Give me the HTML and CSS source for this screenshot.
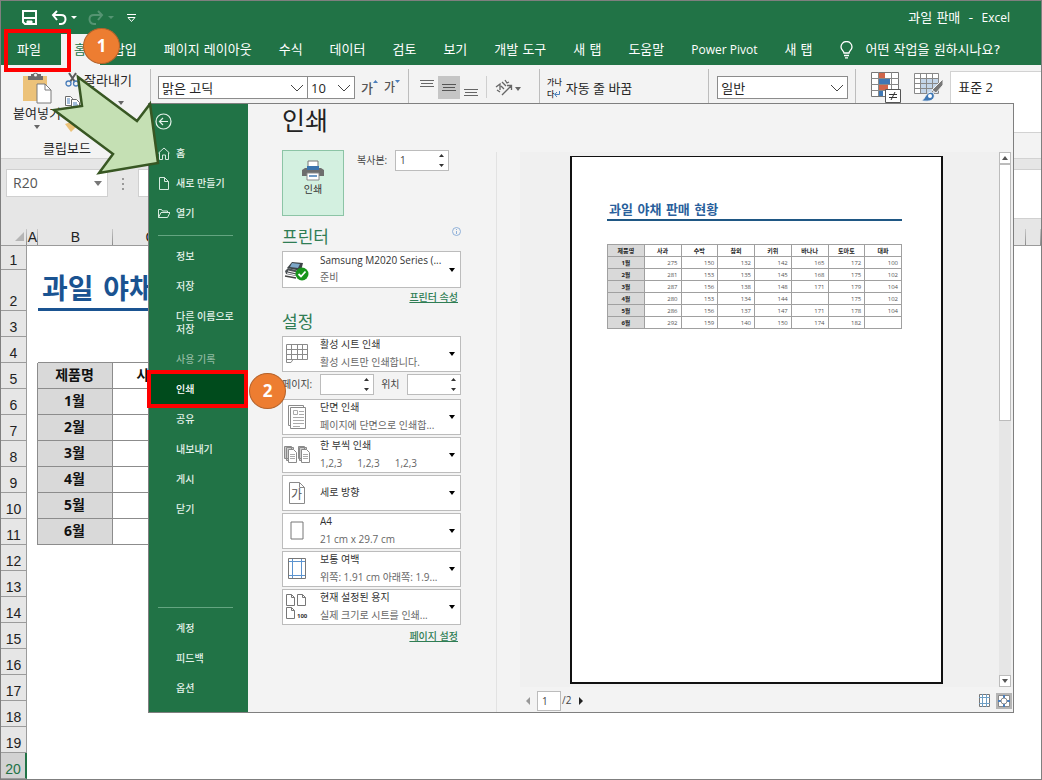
FILE: index.html
```html
<!DOCTYPE html>
<html lang="ko">

<head>
    <meta charset="UTF-8">
    <meta name="viewport" content="width=device-width, initial-scale=1.0">
    <title>과일 판매 - Excel</title>
    <link rel="stylesheet" href="styles.css">
</head>

<body>
    <div class="excel">
        <header class="top">
            <div class="title-bar">
                <button class="quick save" aria-label="저장">
                    <svg width="15" height="15" viewBox="0 0 15 15" fill="none" stroke="#fff" stroke-width="2"><path d="M1 1h13v13H3l-2-2zM1 8h13"/><path d="M5 14v-3h5v3" fill="#fff" stroke-width="1"/></svg>
                </button>
                <button class="quick undo" aria-label="실행 취소">
                    <svg width="27" height="16" viewBox="0 0 27 16" fill="none" stroke="#fff" stroke-width="2"><path d="M6 1L2 5l4 5M2 5h8c6 0 6 8 0 9H8"/><path d="M20 6h6l-3 3z" fill="#fff" stroke="none"/></svg>
                </button>
                <button class="quick redo" aria-label="다시 실행">
                    <svg width="27" height="16" viewBox="0 0 27 16" fill="none" stroke="#559472" stroke-width="2"><path d="M10 1l4 4-4 5M14 5H6c-6 0-6 8 0 9h2"/><path d="M20 6h6l-3 3z" fill="#559472" stroke="none"/></svg>
                </button>
                <button class="quick more" aria-label="빠른 실행 도구 모음">
                    <svg width="9" height="8" viewBox="0 0 9 8" fill="none" stroke="#fff"><path d="M0 .5h9M1 3.500h7l-3.500 4z"/></svg>
                </button>
                <span class="doc-title">과일 판매 &nbsp;- &nbsp;<span class="latin">Excel</span></span>
            </div>
            <nav class="tabs">
                <a class="tab file" href="#">파일</a>
                <a class="tab active" href="#">홈</a>
                <a class="tab" href="#">삽입</a>
                <a class="tab" href="#">페이지 레이아웃</a>
                <a class="tab" href="#">수식</a>
                <a class="tab" href="#">데이터</a>
                <a class="tab" href="#">검토</a>
                <a class="tab" href="#">보기</a>
                <a class="tab" href="#">개발 도구</a>
                <a class="tab" href="#">새 탭</a>
                <a class="tab" href="#">도움말</a>
                <a class="tab latin" href="#">Power Pivot</a>
                <a class="tab" href="#">새 탭</a>
                <a class="tab tell-me" href="#">
                    <svg width="13" height="18" viewBox="0 0 13 18" fill="none" stroke="#fff" stroke-width="1.3"><path d="M4 12c0-2-3-3-3-6a5.400 5.400 0 0 1 11 0c0 3-3 4-3 6zM4 14.500h5M5 16.800h3"/></svg>
                    어떤 작업을 원하시나요?
                </a>
            </nav>
        </header>

        <section class="ribbon">
            <div class="group clipboard">
                <button class="paste">
                    <svg width="30" height="32" viewBox="0 0 30 32"><path d="M1 4h24v25H1z" fill="#ecc279"/><path d="M6 4h3V2h2a3 3 0 0 1 5 0h3v2h2v4H6z" fill="#6b6b6b"/><circle cx="13.500" cy="3" r="1.500" fill="#f3f3f3"/><path d="M15 12h8l6 6v13H15z" fill="#fff" stroke="#7a7a7a"/><path d="M23 12v6h6" fill="none" stroke="#7a7a7a"/></svg>
                    <span>붙여넣기</span>
                    <svg width="6" height="4" viewBox="0 0 6 4"><path d="M0 0h6L3 4z" fill="#666"/></svg>
                </button>
                <div class="clip-tools">
                    <button><svg width="15" height="15" viewBox="0 0 15 15" fill="none" stroke="#5b5b5b" stroke-width="2"><path d="M4 1l6 9M11 1L5 10"/><circle cx="3.500" cy="11.500" r="2.500" stroke="#4a7ebb" stroke-width="1.300"/><circle cx="11" cy="11.500" r="2.500" stroke="#4a7ebb" stroke-width="1.300"/></svg>잘라내기</button>
                    <button aria-label="복사"><svg width="15" height="13" viewBox="0 0 15 13" fill="#fff" stroke="#6b6b6b"><path d="M.5.500h5l2 2v7h-7z"/><path d="M6.500 3.500h5l3 3v6h-8z"/><path d="M2 3h3M2 5h3M2 7h3M8 7h4M8 9h5M8 11h5" stroke="#4a7ebb"/></svg><svg class="caret" width="6" height="4" viewBox="0 0 6 4"><path d="M0 0h6L3 4z" fill="#666"/></svg></button>
                    <button aria-label="서식 복사"><svg width="15" height="13" viewBox="0 0 15 13"><path d="M0 5l6-2 5 5-5 5z" fill="#ecc279"/><path d="M7 3l5-3 2 3-4 4z" fill="#777"/></svg></button>
                </div>
                <span class="group-name">클립보드</span>
            </div>

            <div class="group fonts">
                <label class="combo font-name">
                    <select aria-label="글꼴"><option>맑은 고딕</option></select>
                    <svg width="14" height="8" viewBox="0 0 14 8" fill="none" stroke="#444"><path d="M1 1l6 6 6-6"/></svg>
                </label>
                <label class="combo font-size">
                    <select aria-label="글꼴 크기"><option>10</option></select>
                    <svg width="14" height="8" viewBox="0 0 14 8" fill="none" stroke="#444"><path d="M1 1l6 6 6-6"/></svg>
                </label>
                <button class="grow">가<svg width="5" height="3" viewBox="0 0 5 3"><path d="M0 3h5L2.500 0z" fill="#4a7ebb"/></svg></button>
                <button class="grow small">가<svg width="5" height="3" viewBox="0 0 5 3"><path d="M0 0h5L2.500 3z" fill="#4a7ebb"/></svg></button>
            </div>

            <div class="group aligns">
                <button aria-label="위쪽 맞춤"><svg width="14" height="20" viewBox="0 0 14 20" stroke="#666"><path d="M0 2.500h14M1 5.500h12M0 8.500h14"/></svg></button>
                <button class="on" aria-label="가운데 맞춤"><svg width="14" height="20" viewBox="0 0 14 20" stroke="#555"><path d="M0 6.500h14M1 9.500h12M0 12.500h14"/></svg></button>
                <button aria-label="아래쪽 맞춤"><svg width="14" height="20" viewBox="0 0 14 20" stroke="#666"><path d="M0 11.500h14M1 14.500h12M0 17.500h14"/></svg></button>
                <span class="thin-line"></span>
                <button class="rotate" aria-label="방향"><svg width="26" height="18" viewBox="0 0 26 18" fill="none" stroke="#666" stroke-width="1.300"><path d="M1 8l4-3v6M2 11l3 2M7 3l4 4M6 7l3 3M10 1l2 3 2-1M7 16l9-9M12 6.500h4.500V11"/><path d="M20 8h6l-3 4z" fill="#666" stroke="none"/></svg></button>
            </div>

            <div class="group wrap">
                <button>
                    <span class="wrap-icon">
                        <span>가나</span>
                        <span>다<svg width="6" height="6" viewBox="0 0 6 6" fill="none" stroke="#4a7ebb"><path d="M5.500 0v3.500H1M3 1L.7 3.500 3 6"/></svg></span>
                    </span>
                    자동 줄 바꿈
                </button>
            </div>

            <div class="group numbers">
                <label class="combo">
                    <select aria-label="표시 형식"><option>일반</option></select>
                    <svg width="14" height="8" viewBox="0 0 14 8" fill="none" stroke="#444"><path d="M1 1l6 6 6-6"/></svg>
                </label>
            </div>

            <div class="group styles">
                <button aria-label="조건부 서식"><svg width="30" height="31" viewBox="0 0 30 31"><path d="M.5.500h27v24H.5z" fill="#fff" stroke="#777"/><path d="M8 1h6v5H8zM8 13h9v5H8z" fill="#d0654a"/><path d="M8 7h11v5H8zM8 19h4v5H8z" fill="#3f78b5"/><path d="M0 6.500h28M0 12.500h28M0 18.500h28M7.500 0v24M20.500 0v24" stroke="#888" fill="none"/><path d="M14.500 17.500h15v13h-15z" fill="#fff" stroke="#555"/><path d="M18 22.500h8M18 25.500h8M24 20l-4 8" stroke="#333" fill="none"/></svg></button>
                <button class="cell-style" aria-label="셀 스타일"><svg width="30" height="29" viewBox="0 0 30 29"><path d="M.5.500h24v20H.5z" fill="#fff"/><path d="M7 6h17v14H7z" fill="#c3d5e8"/><path d="M.5.500h24v20H.5zM0 5.500h25M0 10.500h25M0 15.500h25M6.500 0v20M12.500 0v20M18.500 0v20" fill="none" stroke="#888"/><path d="M29 6v6l-7 8-4-3z" fill="#777" stroke="#f3f3f3"/><path d="M7 28c4-1 4-8 10-9 4 1 4 5 2 7-2 3-8 2-12 2z" fill="#3f78b5" stroke="#f3f3f3"/><circle cx="16" cy="23" r="2" fill="#fff"/></svg></button>
                <div class="gallery"><span>표준 2</span></div>
            </div>
        </section>

        <div class="formula-bar">
            <label class="name-box">
                <input type="text" value="R20" aria-label="이름 상자">
                <svg width="8" height="5" viewBox="0 0 8 5"><path d="M0 0h8L4 5z" fill="#777"/></svg>
            </label>
            <svg class="grip" width="2" height="12" viewBox="0 0 2 12" fill="#999"><path d="M0 0h2v2H0zM0 5h2v2H0zM0 10h2v2H0z"/></svg>
            <input class="formula" type="text" aria-label="수식 입력줄">
            <span class="formula-end"></span>
        </div>

        <table class="sheet">
            <colgroup>
                <col class="c-num"><col class="c-a"><col class="c-data"><col class="c-data"><col><col class="c-last">
            </colgroup>
            <thead>
                <tr>
                    <th class="corner"><svg width="9" height="9" viewBox="0 0 9 9"><path d="M9 0v9H0z" fill="#b5b5b5"/></svg></th>
                    <th>A</th><th>B</th><th>C</th><th></th><th></th>
                </tr>
            </thead>
            <tbody>
                <tr class="r1"><th>1</th></tr>
                <tr class="r2"><th>2</th><td></td><td class="sheet-title" colspan="2">과일 야채</td></tr>
                <tr><th>3</th></tr>
                <tr class="above"><th>4</th><td></td><td></td><td></td></tr>
                <tr class="data"><th>5</th><td></td><td>제품명</td><td>사과</td></tr>
                <tr class="data"><th>6</th><td></td><td>1월</td><td></td></tr>
                <tr class="data"><th>7</th><td></td><td>2월</td><td></td></tr>
                <tr class="data"><th>8</th><td></td><td>3월</td><td></td></tr>
                <tr class="data"><th>9</th><td></td><td>4월</td><td></td></tr>
                <tr class="data"><th>10</th><td></td><td>5월</td><td></td></tr>
                <tr class="data"><th>11</th><td></td><td>6월</td><td></td></tr>
                <tr><th>12</th></tr>
                <tr><th>13</th></tr>
                <tr><th>14</th></tr>
                <tr><th>15</th></tr>
                <tr><th>16</th></tr>
                <tr><th>17</th></tr>
                <tr><th>18</th></tr>
                <tr><th>19</th></tr>
                <tr class="current"><th>20</th></tr>
            </tbody>
        </table>

        <!-- file menu window, over the sheet -->
        <div class="backstage">
            <nav class="side">
                <a class="back" href="#" aria-label="뒤로"><svg width="17" height="17" viewBox="0 0 17 17" fill="none" stroke="#e4f2ea" stroke-width="1.200"><circle cx="8.500" cy="8.500" r="7.500"/><path d="M13 8.500H4.500M8 5L4.500 8.500 8 12"/></svg></a>
                <a href="#"><svg width="12" height="13" viewBox="0 0 12 13" fill="none" stroke="#d6eadf"><path d="M.5 6L6 1l5.500 5M1.500 5.500v7H4.500V8h3v4.500h3v-7"/></svg>홈</a>
                <a href="#"><svg width="12" height="13" viewBox="0 0 12 13" fill="none" stroke="#d6eadf"><path d="M1.500.500h5l4 4v8h-9zM6.500.500v4h4"/></svg>새로 만들기</a>
                <a href="#"><svg width="12" height="13" viewBox="0 0 12 13" fill="none" stroke="#d6eadf"><path d="M.5 10.500v-8h3l1 1.500h5v2M.5 10.500l2.500-5h9l-2.500 5z"/></svg>열기</a>
                <hr>
                <a class="sub" href="#">정보</a>
                <a class="sub" href="#">저장</a>
                <a class="sub two" href="#">다른 이름으로 저장</a>
                <a class="sub off" href="#">사용 기록</a>
                <a class="sub print-link" href="#">인쇄</a>
                <a class="sub" href="#">공유</a>
                <a class="sub" href="#">내보내기</a>
                <a class="sub" href="#">게시</a>
                <a class="sub" href="#">닫기</a>
                <div class="side-bottom">
                    <hr>
                    <a class="sub" href="#">계정</a>
                    <a class="sub" href="#">피드백</a>
                    <a class="sub" href="#">옵션</a>
                </div>
            </nav>

            <div class="options">
                <h1>인쇄</h1>
                <div class="print-row">
                    <button class="print-button">
                        <svg width="22" height="21" viewBox="0 0 22 21"><path d="M6 1h10v8H6z" fill="#fff" stroke="#777"/><path d="M0 10l3-2h16l3 2v6H0z" fill="#6d6d6d"/><path d="M5 6h12v4H5z" fill="#3b74ae"/><path d="M5 13h12v7H5z" fill="#fff" stroke="#8a8a8a"/><path d="M7 15h8v2H7z" fill="#6f9ac5"/></svg>
                        인쇄
                    </button>
                    <label for="copies">복사본:</label>
                    <span class="spin">
                        <input id="copies" type="text" value="1">
                        <svg width="5" height="13" viewBox="0 0 5 13" fill="#333"><path d="M0 3h5L2.500 0zM0 10h5l-2.500 3z"/></svg>
                    </span>
                </div>

                <div class="heading">
                    <h2>프린터</h2>
                    <svg width="9" height="9" viewBox="0 0 9 9" fill="none" stroke="#8fb0d8"><circle cx="4.500" cy="4.500" r="4"/><path d="M4.500 2v1M4.500 4v3"/></svg>
                </div>
                <label class="setting">
                    <svg class="icon" width="24" height="22" viewBox="0 0 24 22"><path d="M2 9l5-6 11 1-2 8z" fill="#3d4347"/><path d="M7 4l8 1-2 4-8-1z" fill="#7da7c8"/><path d="M0 12l3-3 11 3v3l-3 2-10-2z" fill="#4e5357"/><path d="M3 12l9 2M2 14l9 2" stroke="#fff"/><path d="M0 17l11 2" stroke="#444" stroke-width="1.500"/><circle cx="17" cy="15" r="6.500" fill="#17951b"/><path d="M13.500 15l2.500 2.500 4.500-5" fill="none" stroke="#fff" stroke-width="1.800"/></svg>
                    <span class="setting-text">
                        <select aria-label="프린터"><option>Samsung M2020 Series (...</option></select>
                        <small>준비</small>
                    </span>
                    <svg class="arrow" width="6" height="4" viewBox="0 0 6 4"><path d="M0 0h6L3 4z"/></svg>
                </label>
                <a class="more-link" href="#">프린터 속성</a>

                <div class="heading second"><h2>설정</h2></div>
                <div class="settings">
                    <label class="setting">
                        <svg class="icon" width="24" height="22" viewBox="0 0 24 22" fill="none" stroke="#8a8a8a"><path d="M1.500 1.500h21v15H8l-2 3H1.500zM1.500 6.500h21M1.500 11.500h21M6.500 1.500v15M12.500 1.500v15M17.500 1.500v15M2 16.500h7"/></svg>
                        <span class="setting-text">
                            <select aria-label="인쇄 대상"><option>활성 시트 인쇄</option></select>
                            <small>활성 시트만 인쇄합니다.</small>
                        </span>
                        <svg class="arrow" width="6" height="4" viewBox="0 0 6 4"><path d="M0 0h6L3 4z"/></svg>
                    </label>
                    <div class="pages">
                        <label for="from">페이지:</label>
                        <span class="spin">
                            <input id="from" type="text">
                            <svg width="5" height="13" viewBox="0 0 5 13" fill="#333"><path d="M0 3h5L2.500 0zM0 10h5l-2.500 3z"/></svg>
                        </span>
                        <label for="to">위치</label>
                        <span class="spin">
                            <input id="to" type="text">
                            <svg width="5" height="13" viewBox="0 0 5 13" fill="#333"><path d="M0 3h5L2.500 0zM0 10h5l-2.500 3z"/></svg>
                        </span>
                    </div>
                    <label class="setting">
                        <svg class="icon" width="24" height="24" viewBox="0 0 24 24" fill="#fff" stroke="#8a8a8a"><path d="M3.500.500h15v20h-15z"/><path d="M5.500 2.500h15v21h-15z"/><path d="M8.500 5.500h4v4h-4zM14 6.500h5M14 9.500h5M8 12.500h11M8 15.500h11M8 18.500h11M8 21.500h7" stroke="#aaa"/></svg>
                        <span class="setting-text">
                            <select aria-label="단면 또는 양면"><option>단면 인쇄</option></select>
                            <small>페이지에 단면으로 인쇄합...</small>
                        </span>
                        <svg class="arrow" width="6" height="4" viewBox="0 0 6 4"><path d="M0 0h6L3 4z"/></svg>
                    </label>
                    <label class="setting">
                        <svg class="icon" width="26" height="18" viewBox="0 0 26 18" fill="#fff" stroke="#8a8a8a"><path d="M.5.500h7v12h-7zM2.500 1.500h7v13h-7z" fill="#ccc"/><path d="M4.500 3.500h5l3 3v10h-8z"/><path d="M14.500.500h6v12h-6zM15.500 1.500h7v13h-7z" fill="#ccc"/><path d="M17.500 3.500h5l3 3v10h-8z"/><path d="M6 8.500h5M6 10.500h5M6 12.500h5M19 8.500h5M19 10.500h5M19 12.500h5" stroke="#aaa"/></svg>
                        <span class="setting-text">
                            <select aria-label="한 부씩 인쇄"><option>한 부씩 인쇄</option></select>
                            <small class="orders"><span>1,2,3</span><span>1,2,3</span><span>1,2,3</span></small>
                        </span>
                        <svg class="arrow" width="6" height="4" viewBox="0 0 6 4"><path d="M0 0h6L3 4z"/></svg>
                    </label>
                    <label class="setting single">
                        <svg class="icon" width="20" height="22" viewBox="0 0 20 22" fill="none" stroke="#8a8a8a"><path d="M2.500.500h10l5 5v16h-15zM12.500.500v5h5"/><text x="4" y="17" font-size="12" fill="#555" stroke="none">가</text></svg>
                        <span class="setting-text">
                            <select aria-label="용지 방향"><option>세로 방향</option></select>
                        </span>
                        <svg class="arrow" width="6" height="4" viewBox="0 0 6 4"><path d="M0 0h6L3 4z"/></svg>
                    </label>
                    <label class="setting">
                        <svg class="icon" width="14" height="20" viewBox="0 0 14 20" fill="#fff" stroke="#777"><path d="M1 1h12v17H1z"/></svg>
                        <span class="setting-text">
                            <select aria-label="용지 크기"><option>A4</option></select>
                            <small>21 cm x 29.7 cm</small>
                        </span>
                        <svg class="arrow" width="6" height="4" viewBox="0 0 6 4"><path d="M0 0h6L3 4z"/></svg>
                    </label>
                    <label class="setting">
                        <svg class="icon" width="18" height="22" viewBox="0 0 18 22" fill="none" stroke="#777"><path d="M.5.500h17v20H.5z"/><path d="M4.500 1v19M13.500 1v19M1 3.500h16M1 17.500h16" stroke="#5b93cf"/></svg>
                        <span class="setting-text">
                            <select aria-label="여백"><option>보통 여백</option></select>
                            <small>위쪽: 1.91 cm 아래쪽: 1.9...</small>
                        </span>
                        <svg class="arrow" width="6" height="4" viewBox="0 0 6 4"><path d="M0 0h6L3 4z"/></svg>
                    </label>
                    <label class="setting">
                        <svg class="icon" width="22" height="26" viewBox="0 0 22 26" fill="none" stroke="#777"><path d="M.5.500h5l3 3v8h-8zM5.500.500v3h3M11.500.500h5l3 3v8h-8zM16.500.500v3h3M.5 13.500h5l3 3v8h-8zM5.500 13.500v3h3"/><text x="11" y="24" font-size="6" font-weight="bold" fill="#333" stroke="none">100</text></svg>
                        <span class="setting-text">
                            <select aria-label="배율"><option>현재 설정된 용지</option></select>
                            <small>실제 크기로 시트를 인쇄...</small>
                        </span>
                        <svg class="arrow" width="6" height="4" viewBox="0 0 6 4"><path d="M0 0h6L3 4z"/></svg>
                    </label>
                </div>
                <a class="more-link" href="#">페이지 설정</a>
            </div>

            <div class="preview">
                <div class="preview-main">
                    <div class="canvas">
                        <div class="paper">
                            <h3>과일 야채 판매 현황</h3>
                            <table class="paper-table">
                                <thead>
                                    <tr><th>제품명</th><th>사과</th><th>수박</th><th>참외</th><th>키위</th><th>바나나</th><th>토마토</th><th>대파</th></tr>
                                </thead>
                                <tbody>
                                    <tr><th>1월</th><td>275</td><td>150</td><td>132</td><td>142</td><td>165</td><td>172</td><td>100</td></tr>
                                    <tr><th>2월</th><td>281</td><td>153</td><td>135</td><td>145</td><td>168</td><td>175</td><td>102</td></tr>
                                    <tr><th>3월</th><td>287</td><td>156</td><td>138</td><td>148</td><td>171</td><td>179</td><td>104</td></tr>
                                    <tr><th>4월</th><td>280</td><td>153</td><td>134</td><td>144</td><td></td><td>175</td><td>102</td></tr>
                                    <tr><th>5월</th><td>286</td><td>156</td><td>137</td><td>147</td><td>171</td><td>178</td><td>104</td></tr>
                                    <tr><th>6월</th><td>292</td><td>159</td><td>140</td><td>150</td><td>174</td><td>182</td><td></td></tr>
                                </tbody>
                            </table>
                        </div>
                    </div>
                    <div class="scroll">
                        <button aria-label="위로"><svg width="6" height="4" viewBox="0 0 6 4"><path d="M0 4h6L3 0z" fill="#555"/></svg></button>
                        <span class="thumb"></span>
                        <button class="down" aria-label="아래로"><svg width="6" height="4" viewBox="0 0 6 4"><path d="M0 0h6L3 4z" fill="#555"/></svg></button>
                    </div>
                </div>
                <div class="pager">
                    <button aria-label="이전 페이지"><svg width="4" height="8" viewBox="0 0 4 8"><path d="M4 0v8L0 4z" fill="#999"/></svg></button>
                    <input type="text" value="1" aria-label="현재 페이지">
                    <span>/2</span>
                    <button aria-label="다음 페이지"><svg width="4" height="8" viewBox="0 0 4 8"><path d="M0 0v8l4-4z" fill="#222"/></svg></button>
                    <button class="margins" aria-label="여백 표시"><svg width="11" height="13" viewBox="0 0 11 13" fill="#fff" stroke="#777"><path d="M.5.500h10v12H.5z"/><path d="M3.500 0v13M7.500 0v13M0 3.500h11M0 9.500h11" stroke="#6f9fc4"/></svg></button>
                    <button class="zoom" aria-label="페이지 확대/축소"><svg width="12" height="12" viewBox="0 0 12 12" fill="#fff" stroke="#8a8a8a"><path d="M.5.500h11v11H.5z"/><path d="M6 0v3M6 9v3M0 6h3M9 6h3" stroke="#4a7ebb" stroke-width="2"/><circle cx="6" cy="6" r="3"/></svg></button>
                </div>
            </div>
        </div>

        <!-- step marks -->
        <div class="mark mark-file"></div>
        <div class="mark mark-print"></div>
        <svg class="big-arrow" width="110" height="102" viewBox="0 0 110 102"><path d="M28 4L87 48l13-17 8 59-59 10 14-19L4 37l28-4z" fill="#c5e0b4" stroke="#385723" stroke-width="2.500"/></svg>
        <div class="step step-one">1</div>
        <div class="step step-two">2</div>
    </div>
</body>

</html>
```

FILE: styles.css
```css
* {
    box-sizing: border-box;
}

body {
    margin: 0;
    font-family: "Open Sans", "Noto Sans CJK KR", sans-serif;
    font-size: 13px;
    line-height: 16px;
    color: #262626;
    background-color: #fff;
}

button,
input,
select {
    font: inherit;
    color: inherit;
    margin: 0;
    padding: 0;
    border: 0;
    border-radius: 0;
    background: none;
}

select {
    appearance: none;
    min-width: 0;
}

input {
    min-width: 0;
}

a {
    color: inherit;
    text-decoration: none;
}

svg {
    display: block;
    flex-shrink: 0;
}

.excel {
    position: relative;
    min-height: 100vh;
    border: 1px solid #7f7f7f;
    overflow: hidden;
}

/* title bar and tabs */

.top {
    height: 64px;
    background-color: #217346;
    color: #fff;
    font-family: "DejaVu Sans", "Noto Sans CJK KR", sans-serif;
    display: flex;
    flex-direction: column;
}

.title-bar {
    height: 33px;
    display: flex;
    align-items: center;
    padding: 0 31px 0 21px;
}

.undo {
    margin-left: 14px;
}

.redo {
    margin-left: 10px;
}

.more {
    margin-left: 12px;
}

.doc-title {
    margin-left: auto;
}

.tabs {
    flex: 1;
    display: flex;
    white-space: nowrap;
}

.tab {
    display: flex;
    align-items: center;
    padding: 0 14px 0 13px;
}

.tab.file {
    padding: 0 20px 0 16px;
}

.tab.active {
    background-color: #f3f3f3;
    color: #217346;
}

.latin {
    font-family: "Open Sans", sans-serif;
    font-size: 12px;
}

.tell-me {
    gap: 13px;
}

/* ribbon */

.ribbon {
    height: 94px;
    background-color: #f3f3f3;
    border-bottom: 1px solid #d2d2d2;
    display: flex;
    white-space: nowrap;
}

.group {
    display: flex;
    align-items: flex-start;
    margin-top: 4px;
    padding-top: 7px;
    border-right: 1px solid #bdbdbd;
}

.combo {
    height: 23px;
    display: flex;
    align-items: center;
    background-color: #fff;
    border: 1px solid #8c8c8c;
    padding: 0 3px;
}

.combo select {
    flex: 1;
}

.clipboard {
    width: 150px;
    flex-shrink: 0;
    display: grid;
    grid-template-columns: 64px 1fr;
    grid-template-rows: 71px 18px;
    padding: 0 0 0 10px;
}

.paste {
    display: flex;
    flex-direction: column;
    align-items: center;
    padding-top: 3px;
    width: 52px;
    white-space: nowrap;
}

.paste span {
    line-height: 18px;
    margin-bottom: 3px;
}

.clip-tools {
    display: flex;
    flex-direction: column;
    gap: 2px;
    margin-left: -10px;
}

.clip-tools button {
    height: 21px;
    display: flex;
    align-items: center;
    gap: 4px;
}

.caret {
    margin-left: 34px;
}

.group-name {
    grid-column: 1 / 3;
    padding-left: 32px;
}

.fonts {
    padding-left: 7px;
    padding-right: 8px;
}

.font-name {
    width: 150px;
}

.font-size {
    width: 48px;
    margin-left: -1px;
}

.grow {
    height: 23px;
    display: flex;
    align-items: flex-start;
    margin-left: 6px;
    padding-top: 4px;
    font-weight: 500;
    color: #555;
}

.grow.small {
    font-size: 12px;
}

.aligns button {
    width: 22px;
    height: 23px;
    display: flex;
    align-items: center;
    justify-content: center;
}

.aligns {
    padding-left: 7px;
    padding-right: 18px;
}

.aligns .on {
    background-color: #c5c5c5;
}

.thin-line {
    width: 1px;
    height: 22px;
    margin: 0 7px 0 4px;
    background-color: #cfcfcf;
}

.aligns .rotate {
    width: 27px;
}

.wrap {
    padding-left: 7px;
    padding-right: 76px;
}

.wrap button {
    height: 23px;
    display: flex;
    align-items: center;
    gap: 4px;
}

.wrap-icon {
    display: flex;
    flex-direction: column;
    font-size: 8px;
    line-height: 12px;
    font-weight: 500;
}

.wrap-icon span {
    height: 12px;
    display: flex;
    align-items: center;
}

.numbers {
    padding-left: 8px;
    padding-right: 7px;
}

.numbers .combo {
    width: 131px;
}

.styles {
    flex: 1;
    border-right: 0;
    padding-left: 15px;
    padding-top: 3px;
}

.cell-style {
    margin-left: 13px;
    padding-top: 1px;
}

.gallery {
    flex: 1;
    height: 62px;
    margin-top: -1px;
    margin-left: 6px;
    background-color: #fff;
    border: 1px solid #d2d2d2;
    border-right: 0;
    padding: 7px;
    overflow: hidden;
}

/* formula bar */

.formula-bar {
    height: 60px;
    padding: 10px 0 0 5px;
    background-color: #e6e6e6;
    display: flex;
    align-items: flex-start;
}

.name-box {
    width: 102px;
    height: 28px;
    display: flex;
    align-items: center;
    padding: 0 5px 0 6px;
    background-color: #fff;
    border: 1px solid #d0d0d0;
    color: #555;
    font-size: 14px;
}

.name-box input {
    flex: 1;
    outline: none;
}

.grip {
    margin: 9px 14px 0 14px;
}

.formula {
    flex: 1;
    height: 28px;
    background-color: #fff;
    border: 1px solid #d0d0d0;
}

.formula-end {
    width: 40px;
    height: 50px;
    background-color: #fff;
    border-top: 1px solid #d0d0d0;
    border-bottom: 1px solid #d0d0d0;
}

/* sheet */

.sheet {
    width: 100%;
    table-layout: fixed;
    border-collapse: separate;
    border-spacing: 0;
}

.c-num {
    width: 26px;
}

.c-a {
    width: 11px;
}

.c-data {
    width: 75px;
}

.c-last {
    width: 15px;
}

.sheet tr {
    height: 26px;
}

.sheet thead tr {
    height: 27px;
}

.sheet .r1 {
    height: 24px;
}

.sheet .r2 {
    height: 41px;
}

.sheet th {
    padding: 0;
    font-family: "Liberation Sans", sans-serif;
    font-size: 14px;
    font-weight: normal;
    color: #222;
    vertical-align: bottom;
    border-bottom: 1px solid #9b9b9b;
    background-color: #e6e6e6;
}

.sheet thead th {
    background: #e6e6e6 linear-gradient(#c8c8c8, #8c8c8c) no-repeat right bottom / 1px 16px;
}

.sheet .corner {
    padding: 0 3px 4px 14px;
}

.sheet tbody th {
    border-right: 1px solid #9b9b9b;
    padding-bottom: 1px;
}

.sheet .current th {
    background-color: #d2d2d2;
    color: #217346;
    border-right: 2px solid #217346;
}

.sheet td {
    padding: 0;
    white-space: nowrap;
}

.sheet .sheet-title {
    padding: 2px 0 0 4px;
    font-family: "DejaVu Sans", "Noto Sans CJK KR", sans-serif;
    font-size: 28px;
    line-height: 36px;
    font-weight: bold;
    color: #1a5391;
    border-bottom: 3px solid #1a5391;
}

.above td + td,
.data td + td {
    border-bottom: 1px solid #8c8c8c;
}

.data td {
    border-right: 1px solid #8c8c8c;
    text-align: center;
    font-size: 14px;
    line-height: 20px;
    font-weight: bold;
    color: #111;
}

.sheet .data td {
    padding: 0 1px 2px 0;
}

.data td:nth-child(3) {
    background-color: #d9d9d9;
}

/* file menu */

.backstage {
    position: absolute;
    left: 147px;
    right: 27px;
    top: 102px;
    bottom: 66px;
    display: flex;
    background-color: #f3f3f3;
    border: 1px solid #7f7f7f;
    font-size: 10px;
    line-height: 13px;
}

.side {
    width: 99px;
    flex-shrink: 0;
    display: flex;
    flex-direction: column;
    background-color: #217346;
    color: #e4f2ea;
    font-weight: 500;
    padding-bottom: 9px;
}

.side a {
    min-height: 30px;
    display: flex;
    align-items: center;
    gap: 6px;
    padding-left: 9px;
}

.side .back {
    min-height: 34px;
    padding-left: 6px;
}

.side .sub {
    padding-left: 27px;
}

.side .two {
    min-height: 43px;
    padding-right: 8px;
}

.side .off {
    color: #8fb9a0;
}

.side .print-link {
    background-color: #004b1c;
    color: #fff;
}

.side hr {
    height: 1px;
    margin: 7px 15px 5px 9px;
    border: 0;
    background-color: #64a581;
}

.side-bottom {
    margin-top: auto;
}

.options {
    width: 248px;
    flex-shrink: 0;
    padding: 0 35px 0 34px;
    color: #444;
}

.options h1 {
    margin: 0;
    padding: 0 0 14px;
    font-size: 25px;
    line-height: 32px;
    font-weight: normal;
    color: #222;
}

.print-row {
    display: flex;
    align-items: flex-start;
}

.print-row label {
    width: 51px;
    padding: 4px 0 0 13px;
    white-space: nowrap;
}

.print-button {
    width: 62px;
    height: 66px;
    display: flex;
    flex-direction: column;
    align-items: center;
    gap: 2px;
    padding-top: 9px;
    background-color: #d3f0e0;
    border: 1px solid #8cc4a6;
    color: #333;
}

.spin {
    width: 54px;
    height: 21px;
    display: flex;
    align-items: center;
    padding: 0 4px;
    background-color: #fff;
    border: 1px solid #bcbcbc;
}

.spin input {
    flex: 1;
    width: 0;
}

.heading {
    display: flex;
    justify-content: space-between;
    margin-top: 11px;
    height: 24px;
}

.heading h2 {
    margin: 0;
    font-size: 17px;
    line-height: 20px;
    font-weight: normal;
    color: #2f7d54;
}

.heading.second {
    margin-top: 8px;
}

.setting {
    height: 37px;
    display: flex;
    align-items: center;
    padding-right: 5px;
    background-color: #fff;
    border: 1px solid #bcbcbc;
}

.settings {
    display: flex;
    flex-direction: column;
    gap: 2px;
}

.settings .setting {
    height: 36px;
}

.icon {
    width: 28px;
}

.setting-text {
    flex: 1;
    min-width: 0;
    display: flex;
    flex-direction: column;
    gap: 3px;
    padding: 0 0 2px 9px;
    white-space: nowrap;
}

.setting-text select {
    width: 100%;
    height: 14px;
    color: #333;
    text-overflow: clip;
}

.setting-text small {
    font-size: 10px;
    line-height: 14px;
    color: #666;
}

.orders {
    display: flex;
    gap: 15px;
}

.pages {
    display: flex;
    align-items: center;
    justify-content: space-between;
    padding-bottom: 2px;
}

.more-link {
    display: block;
    margin: 3px 3px 0 0;
    text-align: right;
    color: #2f7d54;
    font-weight: 500;
    text-decoration: underline;
}

.settings + .more-link {
    margin-top: 5px;
}

.preview {
    flex: 1;
    min-width: 0;
    display: flex;
    flex-direction: column;
    margin-top: 48px;
    padding-left: 23px;
    border-left: 1px solid #e2e2e2;
}

.preview-main {
    flex: 1;
    display: flex;
    justify-content: space-between;
    background-color: #f0f0f0;
}

.canvas {
    width: 100%;
    padding: 4px 56px 3px 50px;
    display: flex;
}

.paper {
    flex: 1;
    background-color: #fff;
    border: 1px solid #111;
    border-width: 1px 2px 2px 2px;
    padding: 44px 39px 0 35px;
}

.paper h3 {
    margin: 0;
    padding-left: 2px;
    font-family: "DejaVu Sans", "Noto Sans CJK KR", sans-serif;
    font-size: 13px;
    line-height: 18px;
    color: #2a5f9c;
    border-bottom: 2px solid #1f5784;
}

.paper-table {
    width: 100%;
    margin-top: 23px;
    table-layout: fixed;
    border-collapse: collapse;
    font-size: 6px;
    line-height: 8px;
}

.paper-table th,
.paper-table td {
    height: 12px;
    padding: 0 3px 0 0;
    border: 1px solid #a0a0a0;
}

.paper-table th {
    padding: 0;
    color: #222;
}

.paper-table th:first-child {
    background-color: #d9d9d9;
}

.paper-table td {
    text-align: right;
    color: #555;
}

.scroll {
    width: 12px;
    margin-right: 2px;
    flex-shrink: 0;
    display: flex;
    flex-direction: column;
    background-color: #e6e6e6;
}

.scroll button {
    height: 12px;
    display: flex;
    align-items: center;
    justify-content: center;
    background-color: #fff;
    border: 1px solid #bcbcbc;
}

.scroll .down {
    margin-top: auto;
}

.thumb {
    height: 48%;
    background-color: #fff;
    border: 1px solid #bcbcbc;
}

.pager {
    height: 25px;
    display: flex;
    align-items: center;
    padding: 2px 1px 0 6px;
    color: #444;
}

.pager input {
    width: 24px;
    height: 20px;
    margin: 0 1px 0 7px;
    padding-left: 4px;
    background-color: #fff;
    border: 1px solid #bcbcbc;
}

.pager span {
    margin-right: 8px;
}

.margins {
    margin-left: auto;
}

.zoom {
    width: 16px;
    height: 16px;
    margin-left: 6px;
    display: flex;
    align-items: center;
    justify-content: center;
    background-color: #b5b5b5;
}

/* step marks, drawn over everything */

.mark {
    position: absolute;
    border: 4px solid #f00;
}

.mark-file {
    left: 3px;
    top: 28px;
    width: 67px;
    height: 43px;
}

.mark-print {
    left: 146px;
    top: 369px;
    width: 101px;
    height: 38px;
}

.big-arrow {
    position: absolute;
    left: 49px;
    top: 72px;
}

.step {
    position: absolute;
    width: 37px;
    height: 36px;
    border: 1px solid #b5622a;
    border-radius: 50%;
    background-color: #ed7d31;
    color: #fff;
    font-size: 17px;
    line-height: 34px;
    font-weight: bold;
    text-align: center;
}

.step-one {
    left: 82px;
    top: 27px;
}

.step-two {
    left: 248px;
    top: 372px;
}
```
